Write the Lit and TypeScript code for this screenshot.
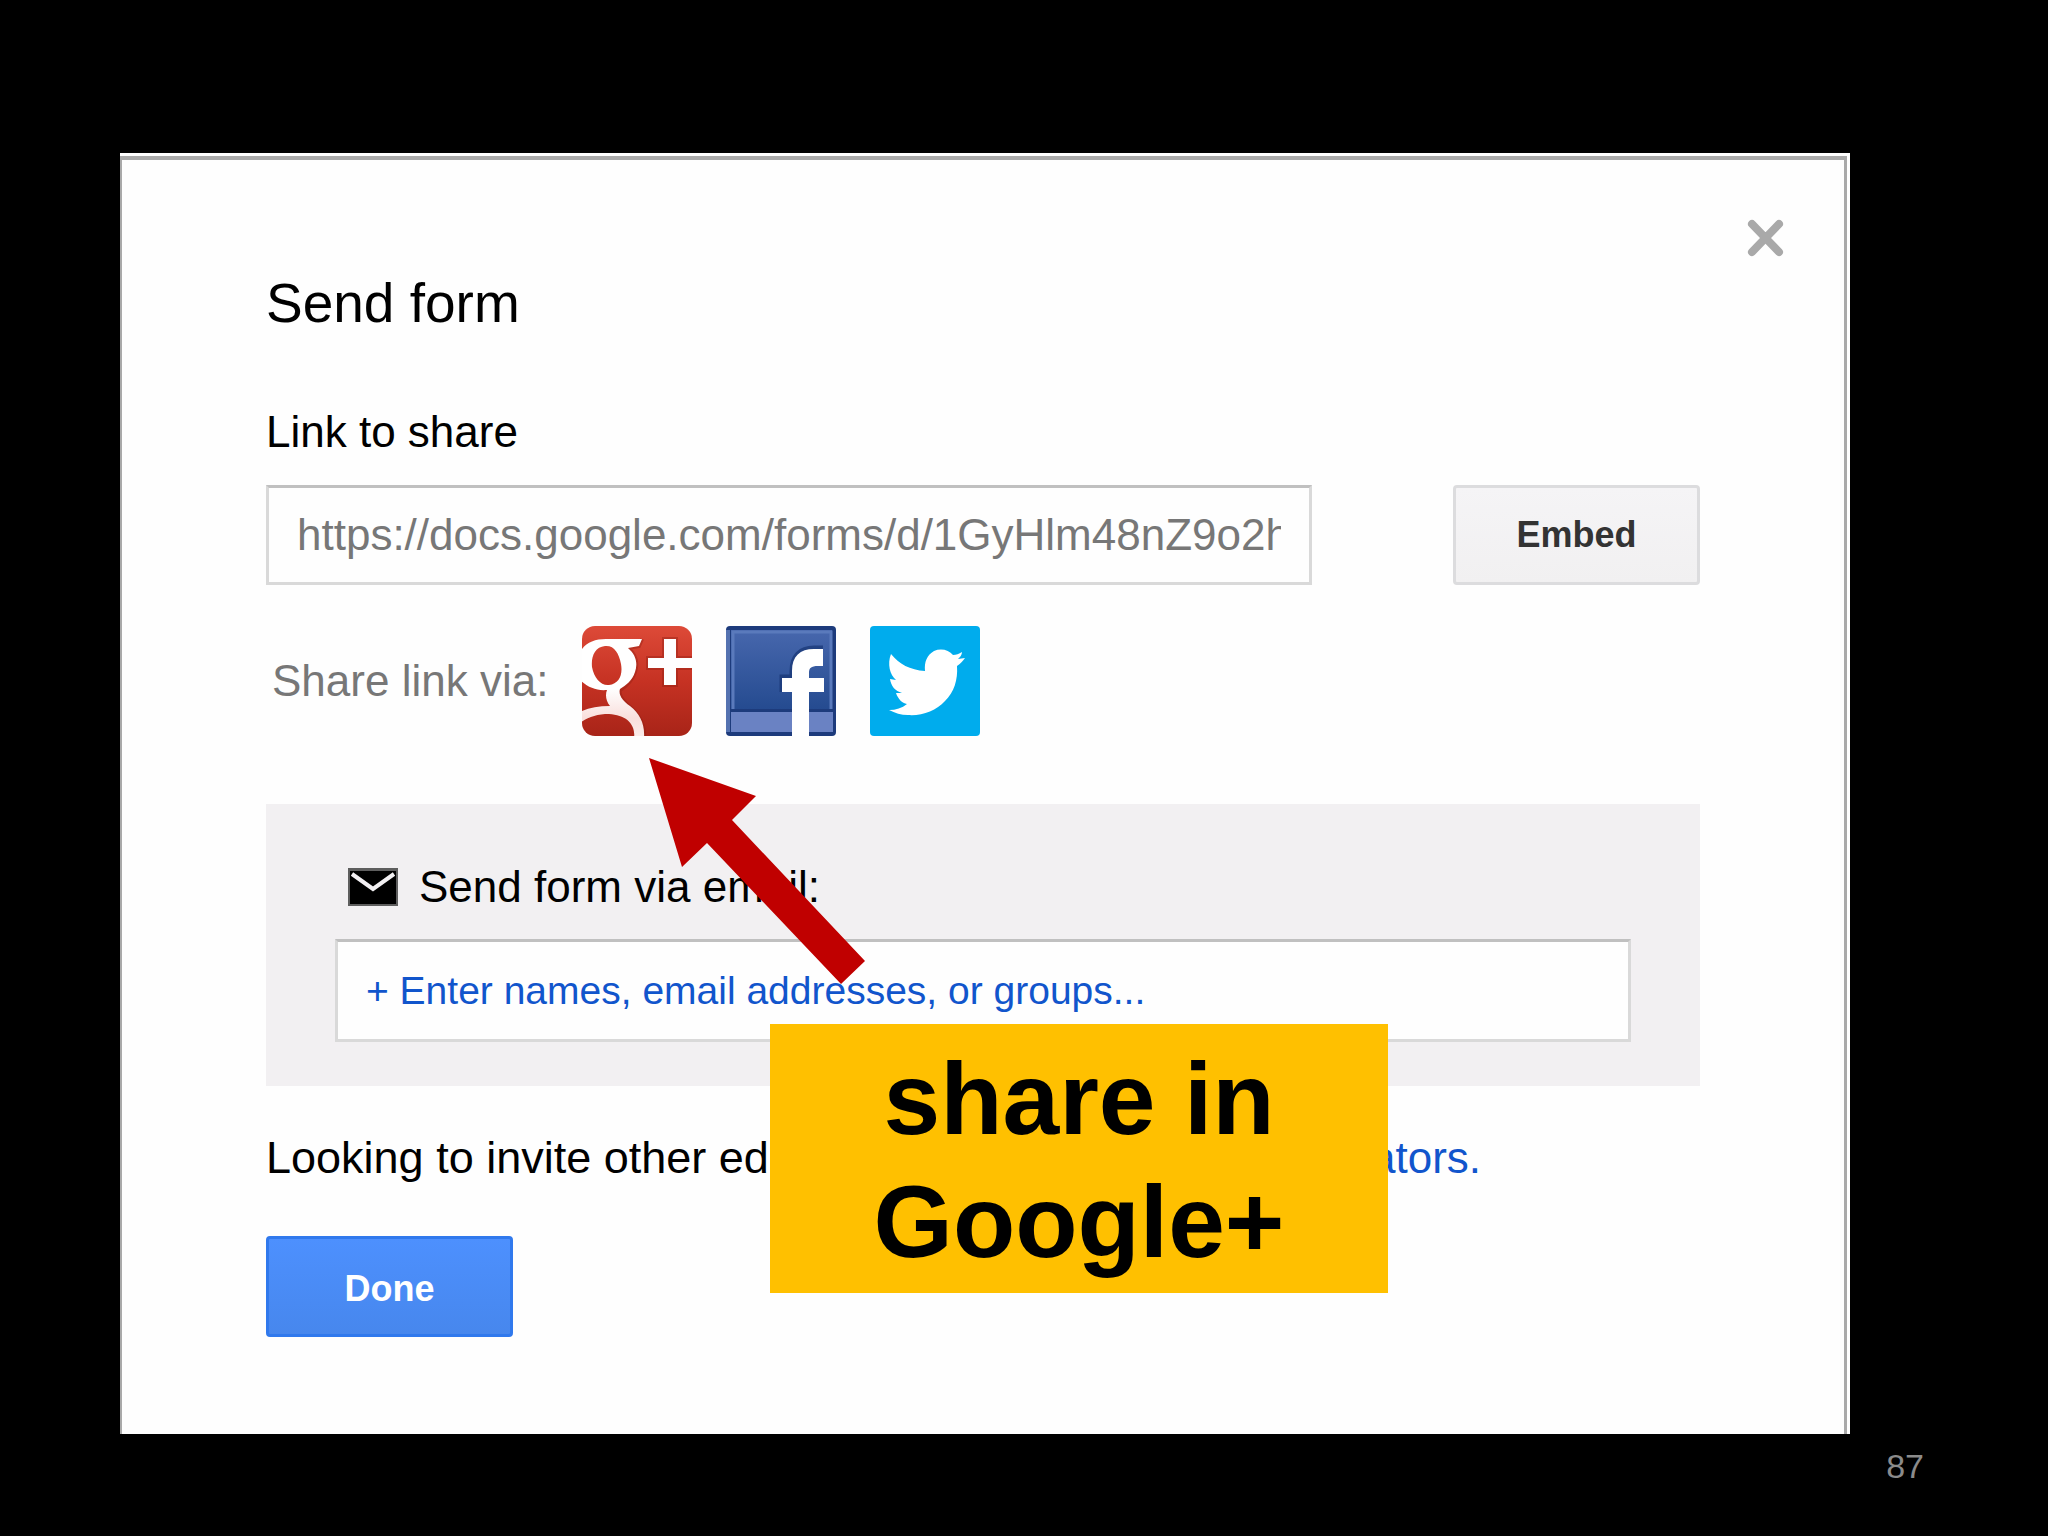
import { LitElement, html, css } from "lit";
import { customElement } from "lit/decorators.js";

@customElement("social-icons")
class SocialIcons extends LitElement {
  static styles = css`
    :host {
      display: flex;
      gap: 34px;
    }
    .link {
      display: block;
      width: 110px;
      height: 110px;
    }
    .icon {
      display: block;
      width: 100%;
      height: 100%;
    }
  `;

  render() {
    return html`
      <a class="link" href="#google-plus" aria-label="Google+">
        <svg class="icon" viewBox="0 0 110 110" aria-hidden="true">
          <defs>
            <linearGradient id="red" x1="0" y1="0" x2="0" y2="1">
              <stop offset="0" stop-color="#dd4a38" />
              <stop offset="0.5" stop-color="#c63223" />
              <stop offset="1" stop-color="#a82418" />
            </linearGradient>
            <linearGradient id="pale" x1="0" y1="0" x2="0" y2="1">
              <stop offset="0" stop-color="#ffffff" />
              <stop offset="0.5" stop-color="#ffffff" />
              <stop offset="0.8" stop-color="#f9dfdc" />
              <stop offset="1" stop-color="#fbeeec" />
            </linearGradient>
            <clipPath id="tile"><rect width="110" height="110" rx="13" /></clipPath>
          </defs>
          <g clip-path="url(#tile)">
            <rect width="110" height="110" fill="url(#red)" />
            <path
              fill="none"
              stroke="#8f1d12"
              stroke-opacity="0.4"
              stroke-width="4"
              d="M60 13L57 20L46 22C54 29 56 37 53 46C50 55 44 60 38 64C36 70 42 76 48 81C57 89 63 98 62 112M66 32H82V13H94V32H110V42H94V59H82V42H66Z"
            />
            <path
              fill="url(#pale)"
              fill-rule="evenodd"
              d="M60 13L57 20L46 22C54 29 56 37 53 46C50 55 44 59 38 63C36 69 41 75 48 80C58 88 63 98 62 112H52C54 98 44 89 27 88C15 88 6 91 -2 97V86C6 82 16 80 28 80C24 75 23 69 25 64C14 65 5 61 -2 54V26C3 17 12 13 24 13ZM23 20C13 21 9 30 10 41C12 52 19 60 27 59C37 58 41 49 39 38C37 27 32 19 23 20Z"
            />
            <path fill="#fff" d="M66 32H82V13H94V32H110V42H94V59H82V42H66Z" />
          </g>
        </svg>
      </a>
      <a class="link" href="#facebook" aria-label="Facebook">
        <svg class="icon" viewBox="0 0 110 110" aria-hidden="true">
          <defs>
            <linearGradient id="blue" x1="0" y1="0" x2="0" y2="1">
              <stop offset="0" stop-color="#4767ad" />
              <stop offset="1" stop-color="#254b90" />
            </linearGradient>
          </defs>
          <rect width="110" height="110" rx="4" fill="#1d3b7c" />
          <rect y="4" width="4" height="102" fill="#5472b0" />
          <rect x="5" y="4" width="101" height="79" fill="url(#blue)" />
          <path d="M7 83V6H105V83" fill="none" stroke="#5a7abc" stroke-width="3" />
          <rect x="5" y="86" width="102" height="20" fill="#6a82c3" />
          <path
            fill="none"
            stroke="#173473"
            stroke-width="5"
            stroke-opacity="0.7"
            d="M56 66V51H66V45C66 30 74 22 88 22H97"
          />
          <path
            fill="#fff"
            d="M66 110V66H56V52H66V45C66 30 74 23 88 23H97V40H92C85 40 83 42 83 47V52H98V66H83V110Z"
          />
        </svg>
      </a>
      <a class="link" href="#twitter" aria-label="Twitter">
        <svg class="icon" viewBox="0 0 110 110" aria-hidden="true">
          <rect width="110" height="110" rx="4" fill="#00aced" />
          <path
            fill="#fff"
            d="M21 28C29 38 40 44 55 45C54 36 57 29 64 25C71 22 79 24 83 29C86 29 89 28 92 26C92 29 90 31 88 33L95 32C93 35 91 37 87 40C88 54 84 66 75 75C66 85 52 90 38 89C31 89 25 87 19 84C26 84 32 82 37 78C32 77 28 73 26 67H32C25 65 21 60 20 53L26 54C20 49 17 38 21 28Z"
          />
        </svg>
      </a>
    `;
  }
}

@customElement("app-root")
class AppRoot extends LitElement {
  static styles = css`
    :host {
      display: block;
      font-family: "Liberation Sans", Arial, sans-serif;
      font-size: 44px;
      line-height: 52px;
      color: #000;
    }
    * {
      box-sizing: border-box;
    }
    .slide {
      display: flex;
      flex-direction: column;
      min-height: 100vh;
      padding-top: 153px;
      background: #000;
    }
    .sheet {
      position: relative;
      margin: 0 198px 0 120px;
      padding: 3px 3px 0 0;
      background: #fefefe;
    }
    .dialog {
      display: flex;
      flex-direction: column;
      align-items: stretch;
      padding: 59px 144px 97px;
      border: solid #a9a9a9;
      border-width: 4px 3px 0 2px;
    }
    .close {
      align-self: flex-end;
      width: 38px;
      height: 38px;
      margin-right: -84px;
      padding: 0;
      border: 0;
      background: none;
    }
    .close-icon {
      display: block;
      width: 38px;
      height: 38px;
    }
    .title {
      margin: 14px 0 71px;
      font-size: 55px;
      line-height: 64px;
      font-weight: 400;
    }
    .link-row {
      display: flex;
      justify-content: space-between;
      gap: 141px;
      margin-top: 27px;
    }
    .field {
      display: block;
      min-width: 0;
      width: 100%;
      height: 100px;
      margin: 0;
      padding: 0 28px;
      border: 3px solid #d9d9d9;
      border-top-color: #c0c0c0;
      border-radius: 0;
      background: #fefefe;
      font: inherit;
      color: #777;
      outline: 0;
    }
    .field.names {
      height: 103px;
      margin-top: 26px;
      font-size: 39px;
      color: #1155cc;
    }
    .field::placeholder {
      color: #1155cc;
      opacity: 1;
    }
    .button {
      flex: none;
      width: 247px;
      height: 100px;
      padding: 0;
      border: 3px solid #dcdcde;
      border-radius: 4px;
      background: linear-gradient(#f5f4f6, #f1f0f1);
      font: bold 36px/44px "Liberation Sans", Arial, sans-serif;
      color: #333;
    }
    .button.done {
      align-self: flex-start;
      height: 101px;
      margin-top: 52px;
      padding-top: 4px;
      border-color: #3079ed;
      background: linear-gradient(#4d90fe, #4787ed);
      color: #fff;
    }
    .share {
      display: flex;
      align-items: center;
      gap: 34px;
      margin-top: 41px;
      padding-left: 6px;
      color: #777;
    }
    .email {
      margin-top: 68px;
      padding: 57px 69px 44px;
      background: #f2f0f2;
    }
    .email-label {
      display: flex;
      align-items: center;
      gap: 21px;
      padding-left: 13px;
    }
    .envelope {
      width: 50px;
      height: 38px;
    }
    .invite {
      margin: 46px 0 0;
      font-size: 45px;
      white-space: nowrap;
    }
    .invite-link {
      font-size: 44px;
      color: #1155cc;
      text-decoration: none;
    }
    .arrow {
      position: absolute;
      left: 529px;
      top: 605px;
      width: 216px;
      height: 226px;
    }
    .callout {
      position: absolute;
      left: 650px;
      top: 871px;
      width: 618px;
      padding: 14px 100px 9px;
      background: #ffc000;
      font-size: 102px;
      line-height: 123px;
      font-weight: 700;
      text-align: center;
    }
    .page-number {
      padding: 12px 124px 0 0;
      font-size: 34px;
      line-height: 40px;
      text-align: right;
      color: #8b8b8b;
    }
  `;

  render() {
    return html`
      <main class="slide">
        <div class="sheet">
          <section class="dialog" aria-labelledby="title">
            <button class="close" type="button" aria-label="Close">
              <svg class="close-icon" viewBox="0 0 38 38" aria-hidden="true">
                <path
                  d="M6 5L33 33M33 5L6 33"
                  fill="none"
                  stroke="#a9a9a9"
                  stroke-width="8"
                  stroke-linecap="round"
                />
              </svg>
            </button>
            <h1 class="title" id="title">Send form</h1>
            <label for="share-url">Link to share</label>
            <div class="link-row">
              <input
                class="field"
                id="share-url"
                type="text"
                readonly
                value="https://docs.google.com/forms/d/1GyHlm48nZ9o2h"
              />
              <button class="button" type="button">Embed</button>
            </div>
            <div class="share">
              <span>Share link via:</span>
              <social-icons></social-icons>
            </div>
            <div class="email">
              <label class="email-label" for="names">
                <svg class="envelope" viewBox="0 0 50 38" aria-hidden="true">
                  <rect width="50" height="38" fill="#5e5e5e" />
                  <rect x="2" y="3" width="46" height="33" fill="#000" />
                  <path d="M4 6L25 21L46 6" fill="none" stroke="#f2f0f2" stroke-width="4" />
                </svg>
                Send form via email:
              </label>
              <input
                class="field names"
                id="names"
                type="text"
                placeholder="+ Enter names, email addresses, or groups..."
              />
            </div>
            <p class="invite">
              Looking to invite other editors to this form?
              <a class="invite-link" href="#collaborators">Add collaborators.</a>
            </p>
            <button class="button done" type="button">Done</button>
          </section>
          <svg class="arrow" viewBox="0 0 216 226" aria-hidden="true">
            <path fill="#c00000" d="M0 0L107 38L83 62L216 203L192 226L58 85L33 109Z" />
          </svg>
          <div class="callout">share in Google+</div>
        </div>
        <footer class="page-number">87</footer>
      </main>
    `;
  }
}
